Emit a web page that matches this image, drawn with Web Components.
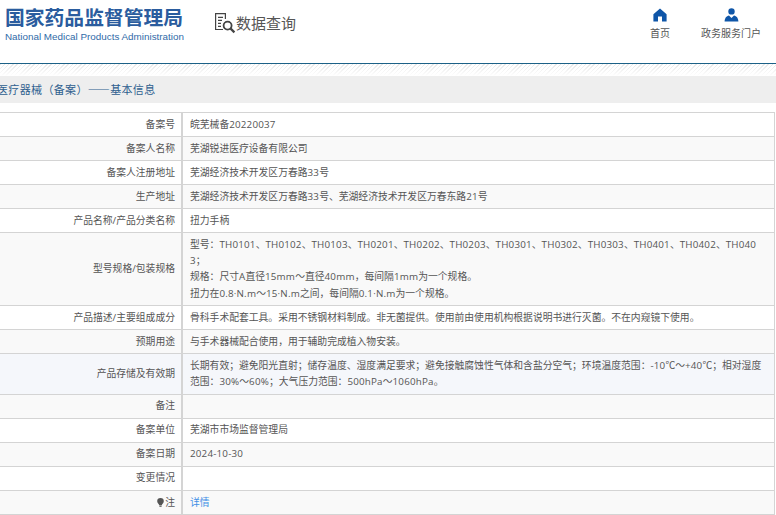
<!DOCTYPE html>
<html lang="zh">
<head>
<meta charset="utf-8">
<title>数据查询</title>
<style>
  html, body { margin: 0; padding: 0; background: #fff; overflow: hidden; }
  body { font-family: "Open Sans", "Noto Sans CJK SC", sans-serif; color: #555; }
  a { color: #3f8fe6; text-decoration: none; }
  .lat { letter-spacing: .2px; }
</style>
</head>
<body>
<site-header>
  <nav-item label="首页" icon="home"></nav-item>
  <nav-item label="政务服务门户" icon="user"></nav-item>
</site-header>
<page-title>医疗器械（备案）——基本信息</page-title>
<record-table>
  <record-row label="备案号">皖芜械备20220037</record-row>
  <record-row label="备案人名称">芜湖锐进医疗设备有限公司</record-row>
  <record-row label="备案人注册地址">芜湖经济技术开发区万春路33号</record-row>
  <record-row label="生产地址">芜湖经济技术开发区万春路33号、芜湖经济技术开发区万春东路21号</record-row>
  <record-row label="产品名称/产品分类名称">扭力手柄</record-row>
  <record-row label="型号规格/包装规格">型号：TH0101、TH0102、TH0103、TH0201、TH0202、TH0203、TH0301、TH0302、TH0303、TH0401、TH0402、TH040<br>3；<br>规格：尺寸A直径15mm～直径40mm，每间隔1mm为一个规格。<br>扭力在0.8·N.m～15·N.m之间，每间隔0.1·N.m为一个规格。</record-row>
  <record-row label="产品描述/主要组成成分">骨科手术配套工具。采用不锈钢材料制成。非无菌提供。使用前由使用机构根据说明书进行灭菌。不在内窥镜下使用。</record-row>
  <record-row label="预期用途">与手术器械配合使用，用于辅助完成植入物安装。</record-row>
  <record-row label="产品存储及有效期" tint>长期有效；避免阳光直射；储存温度、湿度满足要求；避免接触腐蚀性气体和含盐分空气；环境温度范围：-10℃～+40℃；相对湿度<br>范围：30%～60%；大气压力范围：500hPa～1060hPa。</record-row>
  <record-row label="备注"></record-row>
  <record-row label="备案单位">芜湖市市场监督管理局</record-row>
  <record-row label="备案日期">2024-10-30</record-row>
  <record-row label="变更情况"></record-row>
  <record-row label="注" bulb><a href="#">详情</a></record-row>
</record-table>

<script>
  const ICONS = {
    home: `<svg width="14" height="14" viewBox="0 0 14 14"><path fill="#0f56a8" d="M7 .6 13.6 6.2V13.4H9V8.6H5V13.4H.4V6.2Z"/></svg>`,
    user: `<svg width="15" height="14" viewBox="0 0 15 14"><circle cx="7.5" cy="3.4" r="3.2" fill="#0f56a8"/><path fill="#0f56a8" d="M.6 13.6C.8 9.6 2.4 8 5 7.4L7.5 10 10 7.4C12.6 8 14.2 9.6 14.4 13.6Z"/></svg>`
  };

  class SiteHeader extends HTMLElement {
    connectedCallback() {
      this.attachShadow({ mode: 'open' }).innerHTML = `
        <style>
          :host { display: block; height: 64px; box-sizing: border-box; border-bottom: 1px solid #1c6187; }
          #bar { display: flex; align-items: flex-start; height: 63px; }
          #logo { margin: 6px 0 0 5px; width: 179px; }
          #cn { font: bold 19.8px/22px "Noto Sans CJK SC", sans-serif; color: #2a5c9e; white-space: nowrap; }
          #en { font: 9.85px/12px "Liberation Sans", sans-serif; color: #2f6aa8; margin-top: 3px; white-space: nowrap; }
          #query { display: flex; align-items: center; margin: 12px 0 0 30px; font: 15px/22px "Noto Sans CJK SC", sans-serif; color: #555; }
          #query svg { display: block; }
          #nav { display: flex; margin-left: auto; margin-right: 15px; gap: 31px; padding-top: 8px; }
        </style>
        <div id="bar">
          <div id="logo">
            <div id="cn">国家药品监督管理局</div>
            <div id="en">National Medical Products Administration</div>
          </div>
          <div id="query">
            <svg width="22" height="22" viewBox="0 0 22 22" fill="none" stroke="#444">
              <path stroke-width="1.2" d="M9 17.5H1.6V1.6H11.4V7"/>
              <path stroke-width="1.2" d="M4 5.4H9M4 8.4H8M4 11.4H7M4 14.4H7"/>
              <circle cx="13.6" cy="13.6" r="4" stroke-width="1.8"/>
              <path stroke-width="2.2" d="M16.4 16.4 20.4 20.4"/>
            </svg>
            <span>数据查询</span>
          </div>
          <div id="nav"><slot></slot></div>
        </div>`;
    }
  }

  class NavItem extends HTMLElement {
    connectedCallback() {
      this.attachShadow({ mode: 'open' }).innerHTML = `
        <style>
          :host { display: flex; flex-direction: column; align-items: center; gap: 4px; font: 10px/14px "Noto Sans CJK SC", sans-serif; color: #555; }
          svg { display: block; }
        </style>
        ${ICONS[this.getAttribute('icon')]}
        <span>${this.getAttribute('label')}</span>`;
    }
  }

  class PageTitle extends HTMLElement {
    connectedCallback() {
      this.attachShadow({ mode: 'open' }).innerHTML = `
        <style>
          :host { display: block; }
          #hatch { height: 12px; background:
            linear-gradient(to bottom, rgba(255,255,255,.2), #fff),
            repeating-linear-gradient(135deg, #e2e2e2 0 1px, #fff 1px 3px); }
          #band { height: 27px; margin-bottom: 9px; background: #eeeeee; display: flex; align-items: center;
            font: 11px/27px "Noto Sans CJK SC", sans-serif; letter-spacing: .35px; color: #2f5f8f; }
          span { margin-left: -3px; white-space: nowrap; }
        </style>
        <div id="hatch"></div>
        <div id="band"><span><slot></slot></span></div>`;
    }
  }

  class RecordTable extends HTMLElement {
    connectedCallback() {
      this.attachShadow({ mode: 'open' }).innerHTML = `
        <style>
          :host { display: block; width: 775px; box-sizing: border-box; border-top: 1px solid #d4d4d4; border-right: 1px solid #d4d4d4; }
        </style>
        <slot></slot>`;
    }
  }

  class RecordRow extends HTMLElement {
    // the Latin runs are a touch wider than the font gives, so they get their own span
    spaceLatin() {
      [...this.childNodes].filter(n => n.nodeType === 3).forEach(node => {
        const span = document.createElement('span');
        span.innerHTML = node.textContent.replace(/[\x21-\x7e·]+/g, m => `<span class="lat">${m}</span>`);
        node.replaceWith(...span.childNodes);
      });
    }

    connectedCallback() {
      this.spaceLatin();
      const bulb = this.hasAttribute('bulb')
        ? `<svg width="7" height="9" viewBox="0 0 7 9"><path fill="#555" d="M3.5 0A3.3 3.3 0 0 1 6.8 3.3C6.8 5 5 6 4.8 7.2H2.2C2 6 .2 5 .2 3.3A3.3 3.3 0 0 1 3.5 0Z"/><rect x="2.4" y="7.6" width="2.2" height="1.2" fill="#555"/></svg>`
        : '';
      this.attachShadow({ mode: 'open' }).innerHTML = `
        <style>
          :host { display: flex; border-bottom: 1px solid #d4d4d4; font: 9.8px/16.2px "Open Sans", "Noto Sans CJK SC", sans-serif; color: #555; }
          :host(:nth-of-type(even)) { background: #f9f9f9; }
          :host([tint]) { background: #f5f7fb; }
          #label { flex: 0 0 183px; box-sizing: border-box; padding: 3.5px 6px 3.4px 0; text-align: right; border-right: 2px solid #d4d4d4;
            display: flex; justify-content: flex-end; align-items: center; gap: 1px; }
          #value { flex: 1; min-width: 0; min-height: 23.1px; box-sizing: border-box; padding: 3.5px 6px 3.4px 7px; word-break: break-all; }
        </style>
        <div id="label">${bulb}<span>${this.getAttribute('label')}</span></div>
        <div id="value"><slot></slot></div>`;
    }
  }

  customElements.define('nav-item', NavItem);
  customElements.define('site-header', SiteHeader);
  customElements.define('page-title', PageTitle);
  customElements.define('record-table', RecordTable);
  customElements.define('record-row', RecordRow);
</script>
</body>
</html>
